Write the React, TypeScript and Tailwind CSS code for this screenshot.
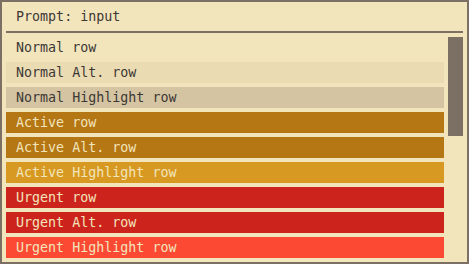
import type { ReactNode } from 'react';

type Row = { label: string; cls: string };

const rows: Row[] = [
    { label: 'Normal row', cls: 'bg-transparent text-[#3c3836]' },
    { label: 'Normal Alt. row', cls: 'bg-[#ebdbb2] text-[#3c3836]' },
    { label: 'Normal Highlight row', cls: 'bg-[#d5c4a1] text-[#3c3836]' },
    { label: 'Active row', cls: 'bg-[#b57614] text-[#f2e5bc]' },
    { label: 'Active Alt. row', cls: 'bg-[#b57614] text-[#f2e5bc]' },
    { label: 'Active Highlight row', cls: 'bg-[#d79921] text-[#f2e5bc]' },
    { label: 'Urgent row', cls: 'bg-[#cc241d] text-[#f2e5bc]' },
    { label: 'Urgent Alt. row', cls: 'bg-[#cc241d] text-[#f2e5bc]' },
    { label: 'Urgent Highlight row', cls: 'bg-[#fb4934] text-[#f2e5bc]' },
];

function Entry({ children, className }: { children: ReactNode; className: string }) {
    return <div className={`h-[21px] flex items-center pl-[10px] whitespace-pre ${className}`}>{children}</div>;
}

export default function App() {
    return (
        <div
            className="w-[469px] h-[264px] border-2 border-[#7c6f64] bg-[#f2e5bc] text-[13.33px] leading-none flex flex-col"
            style={{ fontFamily: '"DejaVu Sans Mono", monospace' }}
        >
            <div className="h-[29px] flex items-center pl-[14px] text-[#3c3836]">Prompt: input</div>
            <div className="mx-[4px] h-[2px] bg-[#7c6f64]" />
            <div className="flex gap-[4px] p-[4px]">
                <div className="flex-1 flex flex-col gap-[4px]">
                    {rows.map((r) => (
                        <Entry key={r.label} className={r.cls}>
                            {r.label}
                        </Entry>
                    ))}
                </div>
                <div className="w-[15px] h-[99px] bg-[#7c6f64]" />
            </div>
        </div>
    );
}
